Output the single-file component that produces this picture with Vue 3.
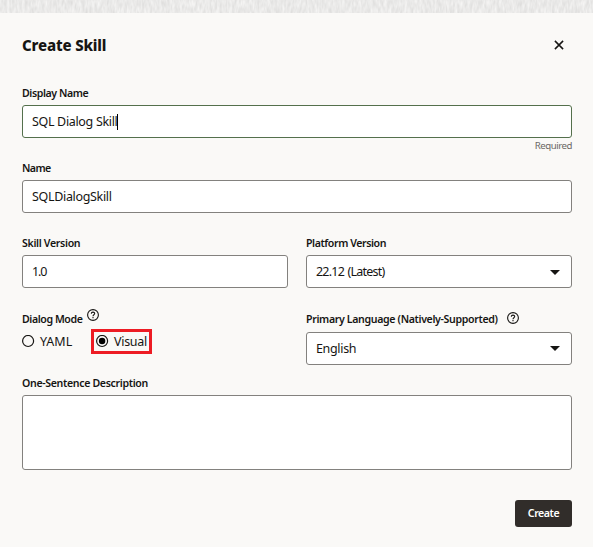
<script setup>
import { ref } from 'vue'

const displayName = ref('SQL Dialog Skill')
const name = ref('SQLDialogSkill')
const version = ref('1.0')
const mode = ref('visual')
</script>

<template>
  <div class="page">
    <svg class="texture" width="593" height="13" aria-hidden="true">
      <filter id="grain" x="0" y="0" width="100%" height="100%" color-interpolation-filters="sRGB">
        <feTurbulence type="fractalNoise" baseFrequency="0.4 0.13" numOctaves="2" seed="4" />
        <feColorMatrix values="0.13 0 0 0 0.853  0.13 0 0 0 0.851  0.13 0 0 0 0.847  0 0 0 0 1" />
      </filter>
      <rect width="593" height="13" filter="url(#grain)" />
    </svg>
    <form class="dialog" @submit.prevent>
      <header class="head">
        <h1>Create Skill</h1>
        <button class="close" type="button" aria-label="Close">
          <svg width="10" height="10" viewBox="0 0 10 10"><path d="M.9.9 9.1 9.1M9.1.9.9 9.1" /></svg>
        </button>
      </header>

      <div class="field display">
        <div class="label"><span class="t-display">Display Name</span></div>
        <div class="box active"><span class="t-sql">{{ displayName }}</span><i class="caret"></i></div>
        <div class="required"><span>Required</span></div>
      </div>

      <div class="field name">
        <div class="label"><span class="t-name">Name</span></div>
        <div class="box"><span class="t-skill">{{ name }}</span></div>
      </div>

      <div class="row versions">
        <div class="field">
          <div class="label"><span class="t-ver">Skill Version</span></div>
          <div class="box"><span class="t-one">{{ version }}</span></div>
        </div>
        <div class="field">
          <div class="label"><span class="t-plat">Platform Version</span></div>
          <div class="box select">
            <span class="t-latest">22.12 (Latest)</span>
            <svg width="10" height="5" viewBox="0 0 10 5"><path d="M0 0h10L5 5z" /></svg>
          </div>
        </div>
      </div>

      <div class="row modes">
        <div class="field">
          <div class="label mode-label">
            <span class="t-mode">Dialog Mode</span>
            <svg class="help" width="12" height="12" viewBox="0 0 12 12">
              <circle cx="6" cy="6" r="5.4" />
              <path d="M4.3 4.8C4.3 2.5 7.7 2.6 7.7 4.6C7.7 5.8 6 5.8 6 7.2M6 8.1v1.2" />
            </svg>
          </div>
          <div class="radios">
            <div class="radio">
              <svg width="13" height="13" viewBox="0 0 13 13"><circle class="ring" cx="6.1" cy="6" r="5.5" /></svg>
              <span class="t-yaml">YAML</span>
            </div>
            <div class="radio marked">
              <svg width="13" height="13" viewBox="0 0 13 13">
                <circle class="ring" cx="6.1" cy="6" r="5.5" />
                <circle v-if="mode === 'visual'" cx="6.1" cy="6" r="3.2" />
              </svg>
              <span class="t-visual">Visual</span>
            </div>
          </div>
        </div>
        <div class="field language">
          <div class="label">
            <span class="t-lang">Primary Language (Natively-Supported)</span>
            <svg class="help" width="12" height="12" viewBox="0 0 12 12">
              <circle cx="6" cy="6" r="5.4" />
              <path d="M4.3 4.8C4.3 2.5 7.7 2.6 7.7 4.6C7.7 5.8 6 5.8 6 7.2M6 8.1v1.2" />
            </svg>
          </div>
          <div class="box select">
            <span class="t-eng">English</span>
            <svg width="10" height="5" viewBox="0 0 10 5"><path d="M0 0h10L5 5z" /></svg>
          </div>
        </div>
      </div>

      <div class="field">
        <div class="label"><span class="t-desc">One-Sentence Description</span></div>
        <div class="box area"></div>
      </div>

      <footer><button class="create" type="submit"><span>Create</span></button></footer>
    </form>
  </div>
</template>

<style>
body { margin: 0; background: #faf9f7; }
</style>

<style scoped>
.page {
  width: 593px;
  height: 547px;
  overflow: hidden;
  background: #faf9f7;
  color: #161513;
  font-family: "Noto Sans", "Open Sans", sans-serif;
}
.page * { box-sizing: border-box; }
.texture { display: block; }
.dialog { padding: 19px 21px 0 22px; }
.head { display: flex; justify-content: space-between; height: 54px; }
h1 { margin: 0; font-size: 15px; line-height: 26px; font-weight: 800; white-space: nowrap; letter-spacing: -0.15px; }
.close { width: 27px; height: 25px; padding: 0; border: 0; background: none; display: grid; place-items: center; }
.close path { stroke: #161513; stroke-width: 1.5; fill: none; }
.field { min-width: 0; }
.label {
  height: 19px;
  line-height: 14px;
  font-size: 10.6px;
  font-weight: 600;
  white-space: nowrap;
  display: flex;
}
.box {
  height: 33px;
  border: 1px solid #83817e;
  border-radius: 3px;
  background: #fff;
  padding: 1px 9px 0;
  display: flex;
  align-items: center;
  font-size: 12.5px;
  line-height: 18px;
  white-space: nowrap;
}
.box.active { border-color: #54704c; }
.caret { width: 1px; height: 16px; background: #000; margin-top: -1px; }
.required { height: 14px; display: flex; justify-content: flex-end; font-size: 9.7px; line-height: 15px; letter-spacing: -0.5px; color: #6b6966; }
.display { height: 75px; }
.name { height: 75px; }
.row { display: grid; grid-template-columns: 1fr 1fr; column-gap: 18px; }
.versions { height: 76px; }
.modes { height: 64px; }
.select { justify-content: space-between; padding-right: 11px; }
.select path { fill: #161513; }
.help { flex: none; fill: none; stroke: #161513; stroke-width: 1.1; }
.mode-label { height: 17px; }
.mode-label .help { margin: -3px 0 0 5px; }
.language .label { height: 20px; }
.language .help { margin: 0 0 0 9px; }
.language .box { padding-top: 0; }
.radios { display: flex; height: 25px; align-items: center; }
.radio { display: flex; align-items: center; gap: 5px; font-size: 12.5px; line-height: 18px; width: 69px; white-space: nowrap; }
.ring { fill: none; stroke: #161513; stroke-width: 1.2; }
.marked { width: 61px; height: 25px; border: 3px solid #ed1c24; padding-left: 2px; }
.area { height: 75px; }
footer { display: flex; justify-content: flex-end; padding-top: 30px; }
.create {
  width: 57px;
  height: 27px;
  padding: 0;
  border: 0;
  border-radius: 3px;
  background: #312d2a;
  color: #fff;
  font: 600 10.6px/27px "Noto Sans", "Open Sans", sans-serif;
  letter-spacing: -0.45px;
}
.t-display, .t-plat, .t-mode { letter-spacing: -0.42px; }
.t-ver { letter-spacing: -0.33px; }
.t-name { letter-spacing: -0.6px; }
.t-lang, .t-desc { letter-spacing: -0.35px; }
.t-sql, .t-skill, .t-eng { letter-spacing: -0.33px; }
.t-one { letter-spacing: -1.1px; }
.t-latest { letter-spacing: -0.78px; word-spacing: 1px; }
.t-yaml { letter-spacing: 0; }
.t-visual { letter-spacing: -0.3px; }
</style>
